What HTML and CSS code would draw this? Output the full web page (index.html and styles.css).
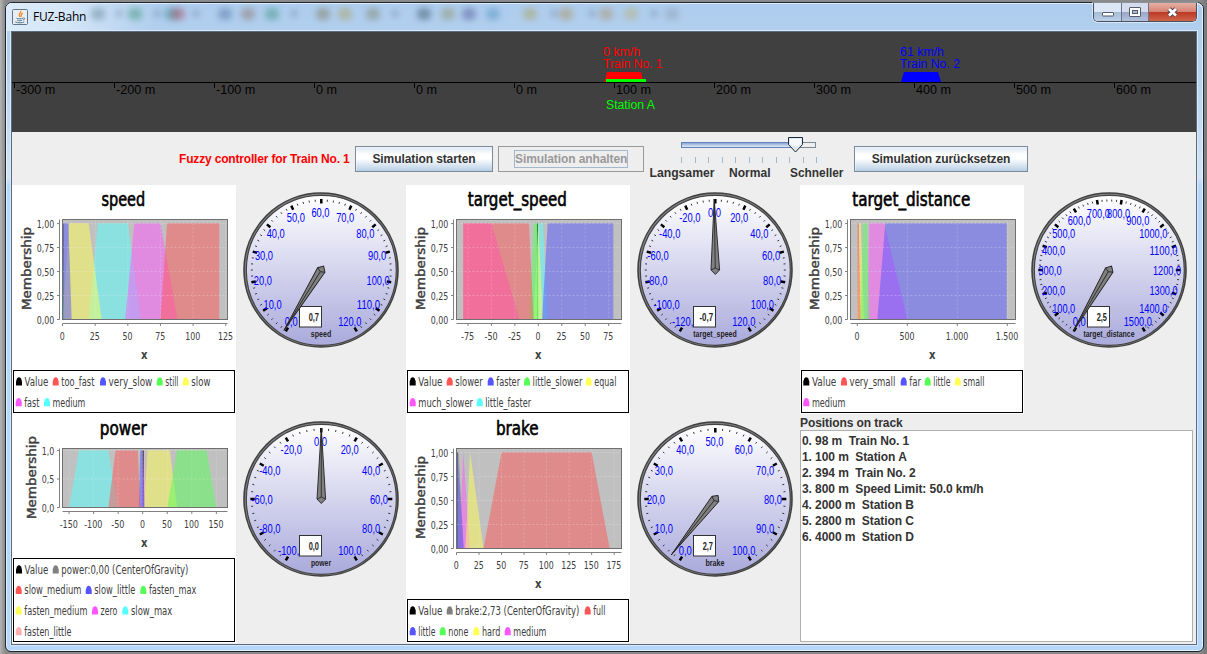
FILE: index.html
```html
<!DOCTYPE html>
<html lang="de">
<head>
<meta charset="utf-8">
<title>FUZ-Bahn</title>
<link rel="stylesheet" href="styles.css">
</head>
<body>
<div class="window">
  <header class="titlebar">
    <div class="blobs" id="blobs"></div>
    <svg class="app-icon" viewBox="0 0 16 16" width="16" height="16">
      <rect x=".5" y=".5" width="15" height="15" rx="1" fill="#e9edf0" stroke="#60748a"/>
      <path d="M8.7 1.8c1.2 2-3.2 2.8-.8 6.2M10.8 4.2C8.500 5.2 9.8 6.3 8.8 8" fill="none" stroke="#f08a24" stroke-width="1.3"/>
      <path d="M4.5 9.3c1.5.7 5 .7 6.4 0M5.2 11.2c1.5.7 4 .7 5 0M3.3 12.9c2 1.2 7.5 1.2 9 0M11.2 9c2-.6 2 1.8-.2 2" fill="none" stroke="#537a99"/>
    </svg>
    <span class="caption">FUZ-Bahn</span>
    <div class="buttons">
      <span class="wbtn min"><svg width="28" height="19"><rect x="8.5" y="9.5" width="11" height="3.500" rx=".5" fill="#fff" stroke="#555b6e"/></svg></span>
      <span class="wbtn max"><svg width="27" height="19"><rect x="7.5" y="4.5" width="11" height="9" rx=".5" fill="#fff" stroke="#555b6e"/><rect x="10.5" y="7.5" width="5" height="3" fill="#a9b9d0" stroke="#555b6e"/></svg></span>
      <span class="wbtn close"><svg width="47" height="19"><path d="M20 6l7 6.500M27 6l-7 6.500" stroke="#5b4750" stroke-width="5"/><path d="M20 6l7 6.500M27 6l-7 6.500" stroke="#fff" stroke-width="2.8"/></svg></span>
    </div>
  </header>
  <main class="client">
    <svg class="track" id="track" width="1184" height="100"></svg>
    <section class="controls">
      <span class="ctl-label">Fuzzy controller for Train No. 1</span>
      <button class="btn start">Simulation starten</button>
      <button class="btn stop" disabled><span>Simulation anhalten</span></button>
      <svg class="slider" id="slider" width="200" height="53"></svg>
      <button class="btn reset">Simulation zurücksetzen</button>
    </section>
    <section class="panels">
      <div class="panel"><svg class="chart" data-chart="speed"></svg><svg class="gauge" data-gauge="speed"></svg></div>
      <div class="panel"><svg class="chart" data-chart="target_speed"></svg><svg class="gauge" data-gauge="target_speed"></svg></div>
      <div class="panel"><svg class="chart" data-chart="target_distance"></svg><svg class="gauge" data-gauge="target_distance"></svg></div>
      <div class="panel"><svg class="chart" data-chart="power"></svg><svg class="gauge" data-gauge="power"></svg></div>
      <div class="panel"><svg class="chart" data-chart="brake"></svg><svg class="gauge" data-gauge="brake"></svg></div>
      <div class="positions">
        <h2>Positions on track</h2>
        <ul>
          <li>0. 98 m&nbsp; Train No. 1</li>
          <li>1. 100 m&nbsp; Station A</li>
          <li>2. 394 m&nbsp; Train No. 2</li>
          <li>3. 800 m&nbsp; Speed Limit: 50.0 km/h</li>
          <li>4. 2000 m&nbsp; Station B</li>
          <li>5. 2800 m&nbsp; Station C</li>
          <li>6. 4000 m&nbsp; Station D</li>
        </ul>
      </div>
    </section>
  </main>
</div>
<script src="script.js"></script>
</body>
</html>
```
FILE: styles.css
```css
* { box-sizing: border-box; }
body {
  margin: 0; width: 1207px; height: 654px; overflow: hidden;
  background: linear-gradient(90deg, #b4b4b4 0, #8a8a8a 5px, #8a8a8a 1200px, #777 1207px);
  padding: 2px 3px 2px 5px;
  font-family: "Liberation Sans", Arial, sans-serif;
  font-size: 12px;
}
.window {
  height: 650px; border: 1px solid #1d2733; border-radius: 7px 7px 6px 6px;
  background: linear-gradient(180deg, #aecdee 0, #b4d0ee 60px, #d3e4f5 175px, #b5d7fb 182px, #b5d7fb 100%);
  box-shadow: inset 0 0 0 1px #e6f2fd;
  padding: 0 6px 6px 5px;
  display: flex; flex-direction: column;
}
.titlebar {
  height: 28px; display: flex; align-items: flex-start; position: relative;
  margin: 0 -6px 0 -5px; padding: 0 6px 0 6px; border-radius: 6px 6px 0 0;
  background: linear-gradient(90deg, rgba(224,238,250,.9) 0, rgba(222,236,250,.8) 60px, rgba(174,205,238,0) 150px);
  box-shadow: inset 0 1px 0 #e2effb;
}
.app-icon { margin-top: 6px; position: relative; }
.caption { font: 12px/16px "Open Sans", sans-serif; margin: 6px 0 0 5px; color: #000; position: relative; letter-spacing: -.2px; }
.buttons { margin-left: auto; display: flex; height: 19px; border: 1px solid #46505f; border-top: 0; border-radius: 0 0 5px 5px; overflow: hidden; position: relative; box-shadow: 0 0 0 1px rgba(255,255,255,.5); }
.wbtn { height: 19px; display: block; }
.wbtn svg { display: block; }
.min { width: 28px; background: linear-gradient(#dbe7f4 0 45%, #a7bcd5 50%, #c0d5ec); border-right: 1px solid #66758a; }
.max { width: 27px; background: linear-gradient(#d5dced 0 45%, #9ca7c8 50%, #b6c5e0); border-right: 1px solid #66758a; }
.close { width: 47px; background: linear-gradient(#e6b0a4 0, #d58475 45%, #bd3a25 50%, #d16a4f); }
.blobs i { position: absolute; width: 14px; height: 12px; top: 5px; border-radius: 5px; filter: blur(3px); opacity: .42; }
.client {
  flex: 1; background: #eee; border: 1px solid #5b6b7e; outline: 1px solid #d9e9f9;
  display: flex; flex-direction: column; width: 1186px; overflow: hidden;
}
.track { display: block; background: #404040; flex: none; width: 1185px; }
.controls { height: 53px; flex: none; display: flex; justify-content: center; align-items: center; gap: 5px; font-weight: bold; padding-right: 1px; }
.ctl-label { width: 171px; color: #f00; white-space: nowrap; letter-spacing: -.17px; }
.btn { height: 26px; padding: 0; border: 1px solid #7a8a99; font: bold 12px "Liberation Sans", sans-serif; letter-spacing: -.09px; color: #333; background: linear-gradient(#dde8f3 0, #fff 32%, #fff 48%, #b8cfe5); white-space: nowrap; box-shadow: inset 1px 1px #fff6; }
.start { width: 138px; }
.stop { width: 146px; background: #eee; color: #999; border-color: #999; box-shadow: none; }
.stop span { display: inline-block; border: 1px solid #a3b8cc; line-height: 16px; width: 114px; }
.reset { width: 174px; }
.slider { flex: none; }
.panels { display: grid; grid-template-columns: repeat(3, 394px); grid-template-rows: 229px 229px; }
.panel { display: flex; }
.chart { width: 224px; height: 229px; background: #fff; }
.gauge { width: 170px; height: 229px; }
.positions { padding-right: 1px; font-weight: bold; color: #333; letter-spacing: -.08px; }
.positions h2 { margin: 0; font-size: 12px; line-height: 16px; height: 16px; padding-top: 1px; }
.positions ul { margin: 0; padding: 2px 1px; list-style: none; height: 212px; border: 1px solid #b0b0b0; background: #fff; line-height: 16px; }
```
FILE: script.js
```js
const COLORS = { black: '#000', gray: '#808080', red: '#f55', blue: '#55f', green: '#5f5', yellow: '#ff5', magenta: '#f5f', cyan: '#5ff', pink: '#ffafaf' };
const UI = "'DejaVu Sans Condensed', 'DejaVu Sans', sans-serif";
const ARIAL = "'Liberation Sans', Arial, sans-serif";

// Text run fitted to a fixed width.
function text(x, y, str, width, opt = {}) {
  const { size = 12, font = ARIAL, fill = '#000', weight = 'normal', anchor = 'start', extra = '' } = opt;
  return `<text x="${x}" y="${y}" font-size="${size}" font-family="${font}" fill="${fill}" font-weight="${weight}" text-anchor="${anchor}" textLength="${width}" lengthAdjust="spacingAndGlyphs" ${extra}>${str}</text>`;
}
const numWidth = s => [...s].reduce((w, c) => w + (c === ',' || c === '.' ? 2.5 : c === '-' ? 3.2 : 5), 0);

// Each set: colour, then x values at membership 0, 1, 1, 0.
// Legend rows: [label, colour, x, width].
const CHARTS = {
  speed: {
    titleW: 43.7, zero: 50.5, unit: 1.306, marker: 0.3, ticks: [0, 25, 50, 75, 100, 125],
    sets: [['cyan', 20, 27, 50, 60], ['magenta', 48, 55, 75, 88], ['yellow', 0, 5, 20, 30], ['green', 0, 0, 0, 1.5], ['blue', 0, 0, 4.5, 7], ['red', 75, 80, 120, 120]],
    legend: [[['Value', 'black', 13, 23.3], ['too_fast', 'red', 49.7, 32.7], ['very_slow', 'blue', 97, 43.3], ['still', 'green', 153.7, 12.7], ['slow', 'yellow', 179.7, 18.7]],
      [['fast', 'magenta', 12.7, 14.7], ['medium', 'cyan', 41, 32.3]]]
  },
  target_speed: {
    titleW: 99, zero: 132.3, unit: .938, marker: -.9, ticks: [-75, -50, -25, 0, 25, 50, 75],
    sets: [['cyan', -5, 0, 5, 10], ['magenta', -80, -80, -50, -20], ['yellow', -5, 0, 0, 5], ['green', -10, -5, 0, 0.5], ['blue', 4, 10, 80, 80], ['red', -80, -80, -10, -5]],
    legend: [[['Value', 'black', 12.7, 23.7], ['slower', 'red', 49.7, 27], ['faster', 'blue', 90.7, 23.3], ['little_slower', 'green', 127, 49.3], ['equal', 'yellow', 188.7, 21.7]],
      [['much_slower', 'magenta', 12.7, 54.3], ['little_faster', 'cyan', 79.7, 45.3]]]
  },
  target_distance: {
    titleW: 118, zero: 57.3, unit: .1, ticks: [0, 500, 1000, 1500],
    sets: [['magenta', 100, 120, 270, 500], ['yellow', 0, 17, 35, 67], ['green', 33, 57, 100, 120], ['blue', 200, 280, 1495, 1495], ['red', 0, 0, 15, 33]],
    legend: [[['Value', 'black', 12.3, 24], ['very_small', 'red', 50, 45.3], ['far', 'blue', 109.7, 11.3], ['little', 'green', 133.7, 16.7], ['small', 'yellow', 163.7, 20.7]],
      [['medium', 'magenta', 12.3, 33]]]
  },
  power: {
    titleW: 47, zero: 130.7, unit: .491, short: true, marker: 1, ticks: [-150, -100, -50, 0, 50, 100, 150],
    sets: [['cyan', -150, -130, -70, -50], ['pink', 0, 2, 4, 8], ['magenta', -2, 0, 0, 2], ['yellow', 3, 10, 55, 70], ['green', 50, 70, 130, 150], ['blue', -8, -5, 0, 4], ['red', -70, -55, -10, -5]],
    legend: [[['Value', 'black', 13, 23.3], ['power:0,00 (CenterOfGravity)', 'gray', 49.7, 126.7]],
      [['slow_medium', 'red', 12.7, 56.7], ['slow_little', 'blue', 82.7, 40.7], ['fasten_max', 'green', 137.3, 47]],
      [['fasten_medium', 'yellow', 12.7, 62.7], ['zero', 'magenta', 89, 16.3], ['slow_max', 'cyan', 119.3, 41]],
      [['fasten_little', 'pink', 12.7, 46.7]]]
  },
  brake: {
    titleW: 42.7, zero: 50.5, unit: .901, marker: .6, ticks: [0, 25, 50, 75, 100, 125, 150, 175],
    sets: [['gray', 0, 1, 2.5, 8], ['magenta', 3, 7.5, 7.5, 15], ['yellow', 10, 15, 15, 30], ['blue', 0, 0, 1, 8], ['red', 30, 50, 150, 170]],
    legend: [[['Value', 'black', 12.7, 23.7], ['brake:2,73 (CenterOfGravity)', 'gray', 49.7, 123.7], ['full', 'red', 187.7, 11.7]],
      [['little', 'blue', 12.7, 16.7], ['none', 'green', 42.7, 19.7], ['hard', 'yellow', 76.3, 18], ['medium', 'magenta', 107.7, 32.7]]]
  }
};

function drawChart(el) {
  const name = el.dataset.chart, c = CHARTS[name];
  const L = 50.5, R = 215.5, T = 34.5, B = c.short ? 93.5 : 134.5, top = c.short ? 36.2 : 38.3;
  const px = v => c.zero + v * c.unit;
  const lab = { size: 11, font: UI, fill: '#404040' };
  let s = text(111.3, 20.7, name, c.titleW, { size: 19.5, font: UI, anchor: 'middle', extra: 'stroke="#000" stroke-width=".6"' });
  s += `<rect x="${L}" y="${T}" width="${R - L}" height="${B - T}" fill="#c0c0c0"/>`;
  if (c.marker !== undefined) s += `<path d="M${px(c.marker)} ${top}V${B}" stroke="#000" stroke-width="1"/>`;
  for (const [col, a, b, d, e] of c.sets)
    s += `<polygon points="${px(a)},${B} ${px(b)},${top} ${px(d)},${top} ${px(e)},${B}" fill="${COLORS[col]}" fill-opacity=".5"/>`;
  const ys = c.short ? ['0,0', '0,5', '1,0'] : ['0,00', '0,25', '0,50', '0,75', '1,00'];
  s += `<path d="M47.5 ${T}V${B}M${L} ${B + 4}H${R}" stroke="#808080"/>`;
  ys.forEach((t, i) => {
    const y = B - (B - top - .3) * i / (ys.length - 1);
    if (i) s += `<path d="M${L} ${y}H${R}" stroke="#fff" stroke-opacity=".25" stroke-dasharray="2 2"/>`;
    s += `<path d="M45 ${y}H47.5" stroke="#808080"/>` + text(42.2, y + 4.2, t, numWidth(t), { ...lab, anchor: 'end' });
  });
  c.ticks.forEach(v => {
    const x = px(v), t = v >= 1000 ? `1.${String(v).slice(1)}` : String(v);
    s += `<path d="M${x} ${T}V${B}" stroke="#fff" stroke-opacity=".2" stroke-dasharray="2 2"/>`;
    s += `<path d="M${x} ${B + 4}v2.5" stroke="#808080"/>` + text(x - .3, B + 20.3, t, numWidth(t), { ...lab, anchor: 'middle' });
  });
  s += `<rect x="${L}" y="${T}" width="${R - L}" height="${B - T}" fill="none" stroke="#707070"/>`;
  const my = c.short ? 63.5 : 83.5, mx = c.short ? 24.3 : 19.3;
  s += text(0, 0, 'Membership', 83, { size: 12, font: UI, fill: '#404040', anchor: 'middle', extra: `stroke="#404040" stroke-width=".4" transform="translate(${mx} ${my}) rotate(-90)"` });
  s += text(132.3, B + 39, 'x', 6.5, { size: 13, font: UI, weight: 'bold', fill: '#404040', anchor: 'middle' });
  const boxY = c.short ? 144.5 : 185.5;
  s += `<rect x="1.5" y="${boxY}" width="221" height="${227.5 - boxY}" fill="#fff" stroke="#000"/>`;
  c.legend.forEach((row, r) => {
    const y = 221.2 - (c.legend.length - 1 - r) * 20.6;
    for (const [t, col, x, w] of row) {
      s += `<path d="M${x - 9} ${y}V${y - 4}L${x - 8} ${y - 7}Q${x - 6} ${y - 9.5} ${x - 4} ${y - 7}L${x - 3} ${y - 4}V${y}Z" fill="${COLORS[col]}"/>`;
      s += text(x - .4, y + .3, t, w + .4, { size: 11.5, font: UI, fill: '#404040' });
    }
  });
  el.innerHTML = s;
}

const GAUGES = {
  speed: { min: 0, max: 120, step: 10, value: .7, shown: '0,7', w: 20 },
  target_speed: { min: -120, max: 120, step: 20, value: -.7, shown: '-0,7', w: 43 },
  target_distance: { min: 0, max: 1500, step: 100, value: 2.5, shown: '2,5', w: 50.7 },
  power: { min: -100, max: 100, step: 20, value: 0, shown: '0,0', w: 19.7 },
  brake: { min: 0, max: 100, step: 10, value: 2.73, shown: '2,7', w: 18.7 }
};

function drawGauge(el) {
  const name = el.dataset.gauge, g = GAUGES[name], C = 85;
  const deg = v => -150 + 300 * (v - g.min) / (g.max - g.min);
  const at = (a, r) => [C + .3 + r * Math.sin(a * Math.PI / 180), C - r * Math.cos(a * Math.PI / 180)];
  const line = (a, r1, r2) => { const [x, y] = at(a, r1), [u, v] = at(a, r2); return `M${x} ${y}L${u} ${v}`; };
  let s = `<defs><linearGradient id="g-${name}" x2="0" y2="1"><stop stop-color="#fff"/><stop offset="1" stop-color="#aaaadc"/></linearGradient></defs>`;
  s += `<circle cx="85" cy="85" r="77" fill="#848484" stroke="#404040" stroke-width="1.6"/><circle cx="85.3" cy="85.3" r="75" fill="url(#g-${name})" stroke="#444" stroke-width="1.2"/>`;
  let major = '', minor = '', labels = '';
  const n = (g.max - g.min) / g.step;
  for (let i = 0; i <= n; i++) {
    const v = g.min + i * g.step, a = deg(v), t = v + ',0', [x, y] = at(a, 58.5);
    major += line(a, 66.5, 71);
    labels += text(x - .8, y + 5.2, t, numWidth(t) + .6, { size: 13.5, fill: '#00f', anchor: 'middle' });
    if (i < n) for (let k = 1; k < 5; k++) minor += line(a + k * 300 / n / 5, 68.5, 70.5);
  }
  s += `<path d="${minor}" stroke="#222" stroke-width=".9"/><path d="${major}" stroke="#000" stroke-width="2.5"/>` + labels;
  s += `<rect x="63.5" y="121.5" width="22" height="20.5" fill="#fff" stroke="#333"/>`;
  s += text(83, 136.3, g.shown, numWidth(g.shown) - 2.2, { size: 10.5, weight: 'bold', fill: '#222', anchor: 'end' });
  s += text(85, 151.7, name, g.w + .4, { size: 9.5, weight: 'bold', fill: '#222', anchor: 'middle' });
  s += `<g transform="translate(85.3 85) rotate(${deg(g.value)})"><path d="M0 -71L4.3 0L0 4.5L-4.3 0Z" fill="#808080" stroke="#222" stroke-width=".9"/><path d="M0 -71V-2M-4.3 0L0 -2L4.3 0" fill="none" stroke="#222" stroke-width=".8"/></g>`;
  el.innerHTML = s;
}

function drawTrack(el) {
  let s = '<path d="M0 50.5H1185" stroke="#000"/>';
  const labels = ['-300 m', '-200 m', '-100 m', '0 m', '0 m', '0 m', '100 m', '200 m', '300 m', '400 m', '500 m', '600 m'];
  labels.forEach((t, i) => {
    const x = 2 + 100 * i;
    s += `<path d="M${x + .5} 51v5" stroke="#000"/>` + text(x + 2, 62, t, t.length === 3 ? 21 : t.length === 5 ? 35 : 39.4);
  });
  s += '<path d="M592.5 50L595 40H629L631.5 50Z" fill="#f00"/><rect x="594" y="47" width="40" height="3" fill="#0f0"/>';
  s += '<path d="M889 50L892 40H926L929 50Z" fill="#00f"/>';
  s += text(591, 24, '0 km/h', 37, { fill: '#f00' }) + text(591, 36, 'Train No. 1', 59.5, { fill: '#f00' });
  s += text(594, 77, 'Station A', 49, { fill: '#0f0' });
  s += text(888, 24, '61 km/h', 44, { fill: '#00f' }) + text(888, 36, 'Train No. 2', 60, { fill: '#00f' });
  el.innerHTML = s;
}

function drawSlider(el) {
  let s = `<defs><linearGradient id="sl" x2="0" y2="1"><stop stop-color="#7f9ccc"/><stop offset="1" stop-color="#eef5fd"/></linearGradient></defs>
  <rect x="32.5" y="10.5" width="134" height="5" fill="#eee" stroke="#7a8a99"/><rect x="32.5" y="10.5" width="114" height="5" fill="url(#sl)" stroke="#6382bf"/>
  <path d="M139.5 5.5H153.500V12.5L146.500 20L139.500 12.5Z" fill="#dfeaf5" stroke="#1c2b3a"/><path d="M141 7h11v5l-5.500 3-5.500-3z" fill="#fff" fill-opacity=".7"/>`;
  for (let i = 0; i < 11; i++) s += `<path d="M${Math.round(32 + 13.5 * i) + .5} 25v6" stroke="#a3b8cc"/>`;
  const o = { weight: 'bold', fill: '#333' };
  s += text(0.5, 45, 'Langsamer', 65, o) + text(80, 45, 'Normal', 41.5, o) + text(141, 45, 'Schneller', 53.5, o);
  el.innerHTML = s;
}

// Blurred toolbar showing through the translucent caption.
const blobs = [[90, '#578'], [127, '#2b8a60'], [163, '#388'], [170, '#a34'], [217, '#469'], [240, '#865'], [264, '#2b8a70'], [315, '#776a40'], [337, '#a94'], [365, '#775'], [416, '#243f4c'], [440, '#885'], [461, '#448'], [485, '#48b'], [522, '#a94'], [558, '#a84'], [598, '#a85'], [623, '#ba6'], [664, '#89a'], [107, '#446'], [145, '#446'], [184, '#446'], [282, '#446'], [383, '#446'], [542, '#446'], [580, '#446'], [642, '#446']];
document.getElementById('blobs').innerHTML = blobs.map(([x, c]) => `<i style="left:${x - 5}px;background:${c}${c === '#446' ? ';width:6px;height:5px;top:8px;margin-left:8px' : ''}"></i>`).join('');
drawTrack(document.getElementById('track'));
drawSlider(document.getElementById('slider'));
document.querySelectorAll('.chart').forEach(drawChart);
document.querySelectorAll('.gauge').forEach(drawGauge);
```
